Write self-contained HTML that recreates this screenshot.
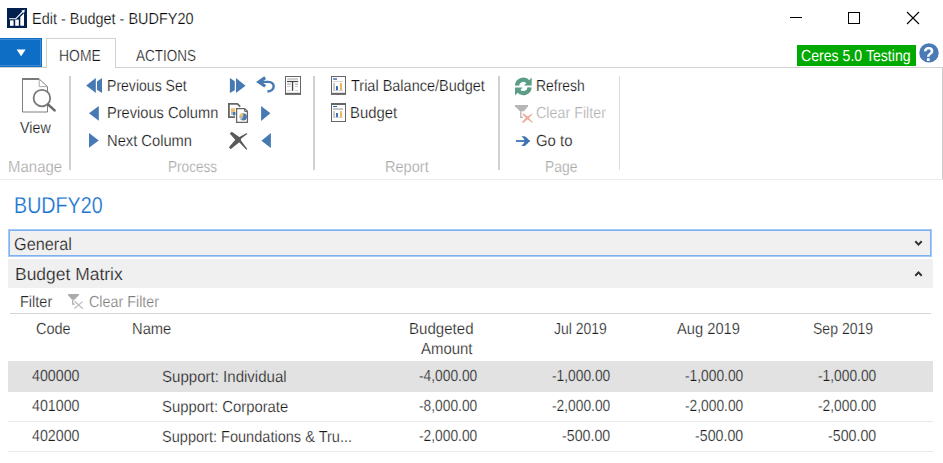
<!DOCTYPE html>
<html><head><meta charset="utf-8"><title>Edit - Budget - BUDFY20</title>
<style>
html,body{margin:0;padding:0;background:#fff}
body{width:943px;height:463px;position:relative;overflow:hidden;font-family:'Liberation Sans',sans-serif}
.t{position:absolute;white-space:pre;line-height:1;transform-origin:0 0}
.b{position:absolute}
svg{position:absolute;overflow:visible}
</style></head><body>
<!-- title bar icon -->
<svg style="left:7px;top:8px" width="20" height="20" viewBox="0 0 20 20">
<rect width="20" height="20" fill="#02204f"/>
<rect x="3" y="12.4" width="3.6" height="5.4" fill="#fff"/>
<rect x="8.2" y="11.6" width="3.6" height="6.2" fill="#fff"/>
<polygon points="13.3,9 17,5.2 17,17.8 13.3,17.8" fill="#fff"/>
<path d="M2.1 10.8 H8.7 L16.4 3" stroke="#fff" stroke-width="1.1" fill="none"/>
<polygon points="17.9,1.7 14.4,2.6 17,5.2" fill="#fff"/>
</svg>
<!-- window controls -->
<div class="b" style="left:790px;top:17px;width:12px;height:1px;background:#000"></div>
<div class="b" style="left:848px;top:12px;width:10px;height:10px;border:1px solid #000"></div>
<svg style="left:907px;top:12px" width="12" height="12" viewBox="0 0 12 12"><path d="M0 0L12 12M12 0L0 12" stroke="#000" stroke-width="1.1" fill="none"/></svg>
<!-- app menu button -->
<div class="b" style="left:0;top:38px;width:42px;height:29px;background:#0e6ec6"></div>
<div class="b" style="left:0;top:39px;width:40px;height:25px;border:1px solid rgba(255,255,255,.2);border-left:0"></div>
<svg style="left:16px;top:49px" width="10" height="8" viewBox="0 0 10 8"><polygon points="0.6,0.4 9.6,0.4 5.1,7.2" fill="#fff"/></svg>
<!-- tab strip lines -->
<div class="b" style="left:0;top:67px;width:943px;height:1px;background:#d2d2d2"></div>
<div class="b" style="left:46px;top:38px;width:68px;height:29px;border:1px solid #d2d2d2;border-bottom:0;background:#fff"></div>
<div class="b" style="left:942px;top:67px;width:1px;height:112px;background:#cdcdcd"></div>
<div class="b" style="left:0;top:179px;width:943px;height:1px;background:#ebebeb"></div>
<!-- environment badge -->
<div class="b" style="left:797px;top:45px;width:119px;height:21px;background:#00aa00"></div>
<!-- help -->
<svg style="left:919px;top:43px" width="20" height="20" viewBox="0 0 20 20"><circle cx="10" cy="9.9" r="9.7" fill="#4b7bb6"/></svg>
<span class="t" style="left:923px;top:44.8px;font-size:19.5px;font-weight:700;color:#fff;transform:scaleX(.95)">?</span>
<!-- ribbon separators -->
<div class="b" style="left:69px;top:76px;width:2px;height:94px;background:#d1d1d1"></div>
<div class="b" style="left:313px;top:76px;width:2px;height:94px;background:#d1d1d1"></div>
<div class="b" style="left:498px;top:76px;width:2px;height:94px;background:#d1d1d1"></div>
<div class="b" style="left:619px;top:76px;width:1px;height:94px;background:#dcdcdc"></div>
<!-- lower panels -->
<div class="b" style="left:8px;top:229px;width:922px;height:26px;border:1px solid #a6c9f6;box-shadow:inset 0 0 0 1px #7db0f1;background:#f0f0f0"></div>
<div class="b" style="left:8px;top:259px;width:925px;height:29px;background:#f0f0f0"></div>
<div class="b" style="left:10px;top:313px;width:921px;height:1px;background:#d6d6d6"></div>
<div class="b" style="left:8px;top:361px;width:925px;height:30.6px;background:#e2e2e2"></div>
<div class="b" style="left:8px;top:421px;width:925px;height:1px;background:#e9e9e9"></div>
<div class="b" style="left:8px;top:451px;width:925px;height:1px;background:#e9e9e9"></div>
<!-- all icons in page coordinates -->
<svg style="left:0;top:0" width="943" height="463" viewBox="0 0 943 463">
<defs><filter id="b" x="-20%" y="-20%" width="140%" height="140%"><feGaussianBlur stdDeviation="0.4"/></filter></defs>
<g filter="url(#b)">
<!-- chevrons -->
<path d="M915.3 241.3 L918.5 244.6 L921.7 241.3" stroke="#303030" stroke-width="2" fill="none"/>
<path d="M915.3 275.7 L918.5 272.4 L921.7 275.7" stroke="#303030" stroke-width="2" fill="none"/>
<!-- View icon -->
<path d="M22.5 79 H39.2 L47.5 86.6 V112 H22.5 Z" fill="#fff" stroke="#7e7e7e" stroke-width="1"/>
<rect x="22" y="78" width="17" height="2" fill="#7a7a7a"/>
<path d="M39.2 79.5 V86.6 H47.5" fill="none" stroke="#a8a8a8" stroke-width="1"/>
<circle cx="41.9" cy="98.1" r="8.3" fill="#fff" stroke="#7a7a7a" stroke-width="1.8"/>
<path d="M48.2 104.6 L54.6 110.4" stroke="#6a6a6a" stroke-width="2.6" stroke-linecap="round"/>
<!-- Previous set -->
<g fill="#4679b2">
<polygon points="86.2,85.6 95.8,77.9 95.8,92.9"/>
<polygon points="97,81.5 102,77.9 102,92.9 97,89.8"/>
<!-- previous column -->
<polygon points="89,113.3 98.8,106 98.8,120.7"/>
<!-- next column -->
<polygon points="98.8,140.4 89,133 89,147.8"/>
<!-- next set -->
<polygon points="229.9,77.9 234.8,81.3 234.8,90.3 229.9,92.9"/>
<polygon points="236,77.9 245.5,85.8 236,92.9"/>
<!-- right tri row2 -->
<polygon points="261.1,106 270.4,113.3 261.1,120.9"/>
<!-- left tri row3 -->
<polygon points="270.9,132.9 261.4,140.8 270.9,147.9"/>
</g>
<!-- undo arrow -->
<path d="M265.2 77.6 L258.9 82 L265.2 86.3" fill="none" stroke="#4679b2" stroke-width="3.2" stroke-linejoin="miter"/>
<path d="M259.5 81.9 H268.3 C275.8 81.9 275.4 91 267.4 91.5" fill="none" stroke="#4679b2" stroke-width="2.4"/>
<!-- T table icon -->
<rect x="285.5" y="76.5" width="15" height="17.6" fill="#fff" stroke="#666" stroke-width="1"/>
<rect x="285" y="92.8" width="16" height="2" fill="#666"/>
<rect x="287.2" y="78.3" width="10.8" height="1.5" fill="#c2c2c2"/>
<rect x="287" y="80.9" width="11.2" height="1.2" fill="#444"/>
<rect x="291.9" y="81" width="1.3" height="9.8" fill="#444"/>
<g fill="#c4c4c4"><rect x="287.2" y="83.4" width="3.5" height="1.6"/><rect x="295" y="83.4" width="3" height="1.6"/>
<rect x="287.2" y="86.2" width="3.5" height=".8"/><rect x="295" y="86.2" width="3" height=".8"/>
<rect x="287.2" y="90" width="3.5" height=".8"/><rect x="295" y="90" width="3" height=".8"/></g>
<!-- copy icon -->
<path d="M235 117.2 H228.9 V103.9 H237.4 L240.2 106.6" fill="none" stroke="#666" stroke-width="1.8"/>
<rect x="231" y="108.2" width="4" height="4" fill="#f0c070"/><rect x="231" y="112" width="2" height="3" fill="#bbb"/><rect x="233" y="112" width="2.4" height="3.4" fill="#4679b2"/>
<path d="M236.6 108.7 H244.6 L247.4 111.4 V122.3 H236.6 Z" fill="#fff" stroke="#666" stroke-width="1.3"/>
<path d="M244.6 108.7 V111.4 H247.4" fill="none" stroke="#666" stroke-width="1"/>
<circle cx="243.3" cy="116.8" r="3.6" fill="#4679b2"/>
<path d="M243.3 116.8 V112.9 A3.9 3.9 0 0 0 239.4 116.8 Z" fill="#f0c070"/>
<path d="M243.3 116.8 H239.4 A3.9 3.9 0 0 0 241.3 120.2 Z" fill="#bdbdbd"/>
<!-- X (delete) icon -->
<polygon points="229.7,133.5 231.8,131.7 240.3,137.7 241.2,140.8 247.3,148.9 246.4,149.7 239.2,142.2 236.6,141.2" fill="#5a5a5a"/>
<polygon points="228.9,147.3 230.7,149.3 239.6,142 241.3,138.6 247.3,134 246.7,133.1 239.4,136.9 236.4,138.4" fill="#5a5a5a"/>
<!-- report icon 1 -->
<rect x="331.5" y="76.5" width="14" height="17.6" fill="#fff" stroke="#666" stroke-width="1"/>
<rect x="331" y="92.8" width="15" height="2" fill="#666"/>
<rect x="333.1" y="78.3" width="3.9" height="1.4" fill="#2f63ab"/>
<rect x="333" y="81.2" width="10" height=".7" fill="#c4c4c4"/>
<rect x="333.3" y="83.1" width="1.6" height="7.3" fill="#bdbdbd"/>
<rect x="336" y="86.1" width="1.9" height="4.3" fill="#2f63ab"/>
<rect x="340" y="83.1" width="2" height="7.3" fill="#eab55c"/>
<rect x="333" y="90.3" width="10" height=".7" fill="#c4c4c4"/>
<!-- report icon 2 -->
<rect x="331.5" y="103.5" width="14" height="18" fill="#fff" stroke="#666" stroke-width="1"/>
<rect x="331" y="103" width="15" height="2" fill="#666"/>
<rect x="333" y="106" width="4" height="1" fill="#2f63ab"/>
<rect x="333" y="108.3" width="10" height="1.5" fill="#b4b4b4"/>
<rect x="333.3" y="111.2" width="1.6" height="6.2" fill="#bdbdbd"/>
<rect x="336.1" y="113" width="1.8" height="4.4" fill="#2f63ab"/>
<rect x="340" y="111.2" width="1.9" height="6.2" fill="#eab55c"/>
<rect x="333" y="117.3" width="10" height=".7" fill="#c4c4c4"/>
<!-- refresh -->
<g fill="none" stroke="#5b9e85" stroke-width="4.2">
<path d="M517 85.7 A6.3 6.3 0 0 1 528.2 82"/>
<path d="M529.6 87.3 A6.3 6.3 0 0 1 518.4 90.8"/>
</g>
<polygon points="531.7,77.4 531.7,85.6 524,85.6" fill="#5b9e85"/>
<polygon points="515,95.6 515,87.4 522.6,87.4" fill="#5b9e85"/>
<!-- clear filter (ribbon, disabled) -->
<polygon points="515,105 528,105 528,106.3 524,111.3 520,111.3 515,106.3" fill="#b6b6b6"/>
<path d="M520.8 111 V117.4 H523" fill="none" stroke="#b6b6b6" stroke-width="1.3"/>
<polygon points="522.3,114.3 523.6,113.2 528,117 532.9,122.3 532.4,123 526.6,118.8" fill="#ecae9f"/>
<polygon points="522,122 523,123.2 528.2,118.8 532.7,113.9 532.2,113.4 526.6,117" fill="#ecae9f"/>
<!-- go to -->
<rect x="515.9" y="140.1" width="14" height="1.8" fill="#3e74b4"/>
<path d="M521.2 136.2 H524.6 C527 137.4 528.6 139.4 529.4 141 C528.6 142.6 527 144.6 524.6 145.9 H521.2 C522.8 144.8 523.8 143.6 524.3 142.6 V139.5 C523.8 138.4 522.8 137.3 521.2 136.2 Z" fill="#3e74b4"/>
<!-- filter bar clear icon -->
<polygon points="67.9,294.1 79,294.1 79,295 74.6,299.8 72,299.8 67.9,295" fill="#ababab"/>
<path d="M72.7 299.5 V304.2 H74.8" fill="none" stroke="#ababab" stroke-width="1.2"/>
<path d="M74.6 301.3 L82.8 308.7 M74.3 308.5 L82.6 301.6" stroke="#bcbcbc" stroke-width="1.2" fill="none"/>
</g>
</svg>

<span class="t" style="left:32.3px;top:11.0px;font-size:16.0px;transform:scaleX(0.9033) skewX(.05deg);color:#000;font-weight:400;-webkit-text-stroke:.25px #fff;">Edit - Budget - BUDFY20</span>
<span class="t" style="left:59.3px;top:48.0px;font-size:16.0px;transform:scaleX(0.8699) skewX(.05deg);color:#1a1a1a;font-weight:400;-webkit-text-stroke:.25px #fff;">HOME</span>
<span class="t" style="left:135.7px;top:48.0px;font-size:16.0px;transform:scaleX(0.843) skewX(.05deg);color:#1a1a1a;font-weight:400;-webkit-text-stroke:.25px #fff;">ACTIONS</span>
<span class="t" style="left:20.0px;top:120.0px;font-size:16.0px;transform:scaleX(0.8943) skewX(.05deg);color:#111;font-weight:400;-webkit-text-stroke:.25px #fff;">View</span>
<span class="t" style="left:8.08px;top:159.0px;font-size:16.0px;transform:scaleX(0.936) skewX(.05deg);color:#a6a6a6;font-weight:400;-webkit-text-stroke:.25px #fff;">Manage</span>
<span class="t" style="left:106.96px;top:78.0px;font-size:16.0px;transform:scaleX(0.8777) skewX(.05deg);color:#111;font-weight:400;-webkit-text-stroke:.25px #fff;">Previous Set</span>
<span class="t" style="left:106.96px;top:105.0px;font-size:16.0px;transform:scaleX(0.9133) skewX(.05deg);color:#111;font-weight:400;-webkit-text-stroke:.25px #fff;">Previous Column</span>
<span class="t" style="left:106.96px;top:133.0px;font-size:16.0px;transform:scaleX(0.9191) skewX(.05deg);color:#111;font-weight:400;-webkit-text-stroke:.25px #fff;">Next Column</span>
<span class="t" style="left:168.45px;top:159.0px;font-size:16.0px;transform:scaleX(0.8505) skewX(.05deg);color:#a6a6a6;font-weight:400;-webkit-text-stroke:.25px #fff;">Process</span>
<span class="t" style="left:351.3px;top:78.0px;font-size:16.0px;transform:scaleX(0.905) skewX(.05deg);color:#111;font-weight:400;-webkit-text-stroke:.25px #fff;">Trial Balance/Budget</span>
<span class="t" style="left:350.45px;top:105.0px;font-size:16.0px;transform:scaleX(0.9282) skewX(.05deg);color:#111;font-weight:400;-webkit-text-stroke:.25px #fff;">Budget</span>
<span class="t" style="left:385.32px;top:159.0px;font-size:16.0px;transform:scaleX(0.9096) skewX(.05deg);color:#a6a6a6;font-weight:400;-webkit-text-stroke:.25px #fff;">Report</span>
<span class="t" style="left:536.22px;top:78.0px;font-size:16.0px;transform:scaleX(0.8711) skewX(.05deg);color:#111;font-weight:400;-webkit-text-stroke:.25px #fff;">Refresh</span>
<span class="t" style="left:536.35px;top:105.0px;font-size:16.0px;transform:scaleX(0.8936) skewX(.05deg);color:#b0b0b0;font-weight:400;-webkit-text-stroke:.25px #fff;">Clear Filter</span>
<span class="t" style="left:536.3px;top:133.0px;font-size:16.0px;transform:scaleX(0.9308) skewX(.05deg);color:#111;font-weight:400;-webkit-text-stroke:.25px #fff;">Go to</span>
<span class="t" style="left:544.62px;top:159.0px;font-size:16.0px;transform:scaleX(0.8692) skewX(.05deg);color:#a6a6a6;font-weight:400;-webkit-text-stroke:.25px #fff;">Page</span>
<span class="t" style="left:801.4px;top:48.0px;font-size:16.0px;transform:scaleX(0.8823) skewX(.05deg);color:#ffffff;font-weight:400;">Ceres 5.0 Testing</span>
<span class="t" style="left:14.0px;top:194.0px;font-size:23.0px;transform:scaleX(0.8554) skewX(.05deg);color:#1a74d0;font-weight:400;-webkit-text-stroke:.2px #fff;">BUDFY20</span>
<span class="t" style="left:14.48px;top:236.0px;font-size:17.5px;transform:scaleX(0.929) skewX(.05deg);color:#1a1a1a;font-weight:400;-webkit-text-stroke:.25px #f0f0f0;">General</span>
<span class="t" style="left:15.0px;top:266.0px;font-size:17.5px;transform:scaleX(0.9976) skewX(.05deg);color:#1a1a1a;font-weight:400;-webkit-text-stroke:.25px #f0f0f0;">Budget Matrix</span>
<span class="t" style="left:19.62px;top:294.0px;font-size:16.0px;transform:scaleX(0.9056) skewX(.05deg);color:#222;font-weight:400;-webkit-text-stroke:.25px #fff;">Filter</span>
<span class="t" style="left:89.4px;top:294.0px;font-size:16.0px;transform:scaleX(0.8949) skewX(.05deg);color:#7c7c7c;font-weight:400;-webkit-text-stroke:.25px #fff;">Clear Filter</span>
<span class="t" style="left:36.3px;top:321.0px;font-size:16.0px;transform:scaleX(0.9066) skewX(.05deg);color:#222;font-weight:400;-webkit-text-stroke:.25px #fff;">Code</span>
<span class="t" style="left:131.96px;top:321.0px;font-size:16.0px;transform:scaleX(0.9206) skewX(.05deg);color:#222;font-weight:400;-webkit-text-stroke:.25px #fff;">Name</span>
<span class="t" style="left:409.35px;top:321.0px;font-size:16.0px;transform:scaleX(0.9415) skewX(.05deg);color:#222;font-weight:400;-webkit-text-stroke:.25px #fff;">Budgeted</span>
<span class="t" style="left:421.3px;top:341.0px;font-size:16.0px;transform:scaleX(0.9339) skewX(.05deg);color:#222;font-weight:400;-webkit-text-stroke:.25px #fff;">Amount</span>
<span class="t" style="left:553.8px;top:321.0px;font-size:16.0px;transform:scaleX(0.8709) skewX(.05deg);color:#222;font-weight:400;-webkit-text-stroke:.25px #fff;">Jul 2019</span>
<span class="t" style="left:677.0px;top:321.0px;font-size:16.0px;transform:scaleX(0.9177) skewX(.05deg);color:#222;font-weight:400;-webkit-text-stroke:.25px #fff;">Aug 2019</span>
<span class="t" style="left:812.5px;top:321.0px;font-size:16.0px;transform:scaleX(0.8772) skewX(.05deg);color:#222;font-weight:400;-webkit-text-stroke:.25px #fff;">Sep 2019</span>
<span class="t" style="left:32.0px;top:368.0px;font-size:16.0px;transform:scaleX(0.8887) skewX(.05deg);color:#1a1a1a;font-weight:400;-webkit-text-stroke:.25px #e2e2e2;">400000</span>
<span class="t" style="left:162.0px;top:369.0px;font-size:16.0px;transform:scaleX(0.9405) skewX(.05deg);color:#1a1a1a;font-weight:400;-webkit-text-stroke:.25px #e2e2e2;">Support: Individual</span>
<span class="t" style="left:418.8px;top:368.0px;font-size:16.0px;transform:scaleX(0.861) skewX(.05deg);color:#1a1a1a;font-weight:400;-webkit-text-stroke:.25px #e2e2e2;">-4,000.00</span>
<span class="t" style="left:551.8px;top:368.0px;font-size:16.0px;transform:scaleX(0.861) skewX(.05deg);color:#1a1a1a;font-weight:400;-webkit-text-stroke:.25px #e2e2e2;">-1,000.00</span>
<span class="t" style="left:684.9px;top:368.0px;font-size:16.0px;transform:scaleX(0.861) skewX(.05deg);color:#1a1a1a;font-weight:400;-webkit-text-stroke:.25px #e2e2e2;">-1,000.00</span>
<span class="t" style="left:818.0px;top:368.0px;font-size:16.0px;transform:scaleX(0.861) skewX(.05deg);color:#1a1a1a;font-weight:400;-webkit-text-stroke:.25px #e2e2e2;">-1,000.00</span>
<span class="t" style="left:32.0px;top:398.0px;font-size:16.0px;transform:scaleX(0.8887) skewX(.05deg);color:#1a1a1a;font-weight:400;-webkit-text-stroke:.25px #fff;">401000</span>
<span class="t" style="left:162.0px;top:399.0px;font-size:16.0px;transform:scaleX(0.9275) skewX(.05deg);color:#1a1a1a;font-weight:400;-webkit-text-stroke:.25px #fff;">Support: Corporate</span>
<span class="t" style="left:418.8px;top:398.0px;font-size:16.0px;transform:scaleX(0.861) skewX(.05deg);color:#1a1a1a;font-weight:400;-webkit-text-stroke:.25px #fff;">-8,000.00</span>
<span class="t" style="left:551.8px;top:398.0px;font-size:16.0px;transform:scaleX(0.861) skewX(.05deg);color:#1a1a1a;font-weight:400;-webkit-text-stroke:.25px #fff;">-2,000.00</span>
<span class="t" style="left:684.9px;top:398.0px;font-size:16.0px;transform:scaleX(0.861) skewX(.05deg);color:#1a1a1a;font-weight:400;-webkit-text-stroke:.25px #fff;">-2,000.00</span>
<span class="t" style="left:818.0px;top:398.0px;font-size:16.0px;transform:scaleX(0.861) skewX(.05deg);color:#1a1a1a;font-weight:400;-webkit-text-stroke:.25px #fff;">-2,000.00</span>
<span class="t" style="left:32.0px;top:428.0px;font-size:16.0px;transform:scaleX(0.8887) skewX(.05deg);color:#1a1a1a;font-weight:400;-webkit-text-stroke:.25px #fff;">402000</span>
<span class="t" style="left:162.0px;top:429.0px;font-size:16.0px;transform:scaleX(0.9092) skewX(.05deg);color:#1a1a1a;font-weight:400;-webkit-text-stroke:.25px #fff;">Support: Foundations &amp; Tru...</span>
<span class="t" style="left:418.8px;top:428.0px;font-size:16.0px;transform:scaleX(0.861) skewX(.05deg);color:#1a1a1a;font-weight:400;-webkit-text-stroke:.25px #fff;">-2,000.00</span>
<span class="t" style="left:562.2px;top:428.0px;font-size:16.0px;transform:scaleX(0.888) skewX(.05deg);color:#1a1a1a;font-weight:400;-webkit-text-stroke:.25px #fff;">-500.00</span>
<span class="t" style="left:695.3px;top:428.0px;font-size:16.0px;transform:scaleX(0.888) skewX(.05deg);color:#1a1a1a;font-weight:400;-webkit-text-stroke:.25px #fff;">-500.00</span>
<span class="t" style="left:828.4px;top:428.0px;font-size:16.0px;transform:scaleX(0.888) skewX(.05deg);color:#1a1a1a;font-weight:400;-webkit-text-stroke:.25px #fff;">-500.00</span>
</body></html>
